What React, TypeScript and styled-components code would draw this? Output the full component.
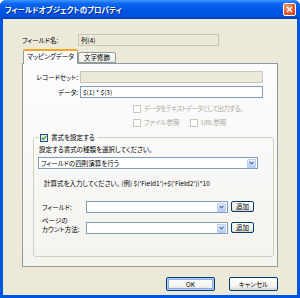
import styled, { createGlobalStyle } from "styled-components";

const GlobalStyle = createGlobalStyle`
  body {
    margin: 0;
    font-family: "Noto Sans CJK JP", "Noto Sans", sans-serif;
    font-feature-settings: "palt";
  }
`;

const Window = styled.div`
  width: 300px;
  height: 298px;
  box-sizing: border-box;
  display: flex;
  flex-direction: column;
  background: #0055e5;
  border-radius: 6px 6px 0 0;
  overflow: hidden;
`;

const TitleBar = styled.div`
  height: 19px;
  flex: none;
  display: flex;
  align-items: center;
  justify-content: space-between;
  padding: 0 4px 0 5px;
  background: linear-gradient(#3d95ff 0%, #0a66f0 20%, #0055e5 55%, #0050de 85%, #003fc0 100%);
`;

const Title = styled.div`
  color: #ffffff;
  font-size: 7.5px;
  font-weight: 700;
  text-shadow: 1px 1px 0 #0b2f8f;
`;

const CloseButton = styled.div`
  width: 13px;
  height: 13px;
  box-sizing: border-box;
  border: 1px solid #ffffff;
  border-radius: 2px;
  background: radial-gradient(circle at 35% 30%, #f4a07c 0%, #e35a2f 55%, #c43c12 100%);
  display: flex;
  align-items: center;
  justify-content: center;
`;

const Client = styled.div`
  flex: 1;
  margin: 0 3px 3px;
  background: #ece9d8;
  padding: 15px 19px 0 19px;
  display: flex;
  flex-direction: column;
`;

const NameRow = styled.div`
  display: flex;
  align-items: center;
  height: 12px;
`;

const Label = styled.div<{ $w?: number; $right?: boolean }>`
  width: ${(p) => (p.$w ? `${p.$w}px` : "auto")};
  flex: none;
  font-size: 6.5px;
  line-height: 9px;
  color: #000000;
  text-align: ${(p) => (p.$right ? "right" : "left")};
  white-space: nowrap;
`;

const TextBox = styled.div<{ $w: number; $disabled?: boolean }>`
  width: ${(p) => p.$w}px;
  height: 12px;
  box-sizing: border-box;
  border: 1px solid ${(p) => (p.$disabled ? "#c9c7ba" : "#7f9db9")};
  background: ${(p) => (p.$disabled ? "#ece9d8" : "#ffffff")};
  font-size: 6.5px;
  line-height: 10px;
  padding-left: 2px;
  color: #000000;
  white-space: nowrap;
`;

const TabStrip = styled.div`
  display: flex;
  align-items: flex-end;
  height: 14px;
  margin-top: 3px;
  padding-left: 1px;
  position: relative;
  z-index: 1;
`;

const Tab = styled.div<{ $active?: boolean; $w: number }>`
  width: ${(p) => p.$w}px;
  height: ${(p) => (p.$active ? 15 : 11)}px;
  box-sizing: border-box;
  border: 1px solid #919b9c;
  border-bottom: ${(p) => (p.$active ? "none" : "1px solid #919b9c")};
  border-top: ${(p) => (p.$active ? "2px solid #f5a623" : "1px solid #919b9c")};
  border-radius: 2px 2px 0 0;
  background: ${(p) =>
    p.$active ? "#fcfcfe" : "linear-gradient(#ffffff, #ecebe6)"};
  margin-bottom: ${(p) => (p.$active ? -1 : 0)}px;
  font-size: 6.5px;
  line-height: ${(p) => (p.$active ? 11 : 9)}px;
  text-align: center;
  white-space: nowrap;
`;

const TabPanel = styled.div`
  width: 256px;
  height: 204px;
  box-sizing: border-box;
  border: 1px solid #919b9c;
  background: linear-gradient(#fcfcfe, #f4f3ee);
  padding: 7px 0 0 0;
  display: flex;
  flex-direction: column;
`;

const FieldRow = styled.div<{ $gap?: number }>`
  display: flex;
  align-items: center;
  gap: 2px;
  margin-top: ${(p) => p.$gap ?? 0}px;
`;

const OptionRow = styled.div<{ $top: number }>`
  display: flex;
  align-items: center;
  padding-left: 110px;
  margin-top: ${(p) => p.$top}px;
  height: 9px;
`;

const Option = styled.div<{ $disabled?: boolean; $w?: number; $tight?: boolean }>`
  display: flex;
  align-items: center;
  gap: 3px;
  width: ${(p) => (p.$w ? `${p.$w}px` : "auto")};
  font-size: 6.5px;
  line-height: 9px;
  letter-spacing: ${(p) => (p.$tight ? "-0.6px" : "0")};
  color: ${(p) => (p.$disabled ? "#aca899" : "#000000")};
  white-space: nowrap;
`;

const Box = styled.div<{ $disabled?: boolean }>`
  width: 8px;
  height: 8px;
  box-sizing: border-box;
  flex: none;
  border: 1px solid ${(p) => (p.$disabled ? "#cac8bb" : "#1c5180")};
  background: ${(p) =>
    p.$disabled ? "#ffffff" : "linear-gradient(135deg, #dcdcd7, #ffffff)"};
  display: flex;
  align-items: center;
  justify-content: center;
`;

const GroupBox = styled.fieldset`
  margin: 6px 0 0 10px;
  width: 241px;
  height: 124px;
  box-sizing: border-box;
  border: 1px solid #d0d0bf;
  border-radius: 3px;
  padding: 0 0 0 5px;
  display: flex;
  flex-direction: column;
`;

const Legend = styled.legend`
  padding: 0 2px 0 1px;
  margin-left: 0;
  display: flex;
  align-items: center;
  gap: 3px;
  font-size: 6.5px;
  line-height: 9px;
`;

const Hint = styled.div<{ $top: number; $left?: number }>`
  font-size: 6.5px;
  line-height: 9px;
  margin-top: ${(p) => p.$top}px;
  margin-left: ${(p) => p.$left ?? 0}px;
  white-space: nowrap;
`;

const Select = styled.div<{ $w: number }>`
  width: ${(p) => p.$w}px;
  height: 12px;
  box-sizing: border-box;
  border: 1px solid #7f9db9;
  background: #ffffff;
  display: flex;
  align-items: center;
  justify-content: space-between;
  padding: 0 1px 0 2px;
  font-size: 6.5px;
  line-height: 10px;
  white-space: nowrap;
  flex: none;
`;

const SelectMain = styled(Select)`
  margin: 3px 0 0 -1px;
`;

const DropArrow = styled.div`
  width: 9px;
  height: 9px;
  box-sizing: border-box;
  border: 1px solid #b9cdf7;
  border-radius: 1px;
  background: linear-gradient(#e3ecfd, #b6cbf6);
  display: flex;
  align-items: center;
  justify-content: center;
`;

const ComboRow = styled.div<{ $top: number; $bottom?: boolean }>`
  display: flex;
  align-items: ${(p) => (p.$bottom ? "flex-end" : "center")};
  margin-top: ${(p) => p.$top}px;
  padding-left: 3px;
`;

const ComboLabel = styled.div`
  width: 44px;
  flex: none;
  font-size: 6.5px;
  line-height: 9px;
  white-space: nowrap;
`;

const SmallButton = styled.div`
  width: 23px;
  height: 11px;
  box-sizing: border-box;
  margin: 0 0 1px 3px;
  border: 1px solid #003c74;
  border-radius: 2px;
  background: linear-gradient(#ffffff, #ecebe6 80%, #d6d0c5);
  font-size: 6.5px;
  line-height: 9px;
  text-align: center;
`;

const ButtonRow = styled.div`
  display: flex;
  justify-content: flex-end;
  gap: 14px;
  margin-top: 10px;
`;

const Button = styled.div<{ $default?: boolean }>`
  width: 49px;
  height: 14px;
  box-sizing: border-box;
  border: 1px solid #003c74;
  border-radius: 2px;
  background: linear-gradient(#ffffff, #f3f3ef 70%, #d6d0c5);
  box-shadow: ${(p) =>
    p.$default ? "inset 0 0 0 1px #b7cdf4, inset 0 0 0 2px #89ade4" : "none"};
  font-size: 6.5px;
  line-height: 12px;
  text-align: center;
`;

const Check = () => (
  <svg width="6" height="6" viewBox="0 0 6 6">
    <path d="M0.8 3 L2.3 4.6 L5.2 1.2" fill="none" stroke="#21a121" strokeWidth="1.3" />
  </svg>
);

const Arrow = () => (
  <svg width="5" height="4" viewBox="0 0 5 4">
    <path d="M0.5 0.8 L2.5 2.8 L4.5 0.8" fill="none" stroke="#4d6185" strokeWidth="1.1" />
  </svg>
);

const CloseX = () => (
  <svg width="7" height="7" viewBox="0 0 7 7">
    <path d="M1 1 L6 6 M6 1 L1 6" stroke="#ffffff" strokeWidth="1.4" />
  </svg>
);

const Combo = () => (
  <Select $w={142}>
    <span />
    <DropArrow>
      <Arrow />
    </DropArrow>
  </Select>
);

export default function App() {
  return (
    <>
      <GlobalStyle />
      <Window>
        <TitleBar>
          <Title>フィールドオブジェクトのプロパティ</Title>
          <CloseButton>
            <CloseX />
          </CloseButton>
        </TitleBar>
        <Client>
          <NameRow>
            <Label $w={56}>フィールド名:</Label>
            <TextBox $w={141} $disabled>
              列(4)
            </TextBox>
          </NameRow>
          <TabStrip>
            <Tab $active $w={55}>
              マッピングデータ
            </Tab>
            <Tab $w={38}>文字修飾</Tab>
          </TabStrip>
          <TabPanel>
            <FieldRow>
              <Label $w={55} $right>
                レコードセット:
              </Label>
              <TextBox $w={183} $disabled />
            </FieldRow>
            <FieldRow $gap={3}>
              <Label $w={55} $right>
                データ:
              </Label>
              <TextBox $w={183}>$(1) * $(3)</TextBox>
            </FieldRow>
            <OptionRow $top={6}>
              <Option $disabled $tight>
                <Box $disabled />
                データをテキストデータとして出力する。
              </Option>
            </OptionRow>
            <OptionRow $top={5}>
              <Option $disabled $w={57}>
                <Box $disabled />
                ファイル参照
              </Option>
              <Option $disabled>
                <Box $disabled />
                URL参照
              </Option>
            </OptionRow>
            <GroupBox>
              <Legend>
                <Box>
                  <Check />
                </Box>
                書式を設定する
              </Legend>
              <Hint $top={3}>設定する書式の種類を選択してください。</Hint>
              <SelectMain $w={220}>
                フィールドの四則演算を行う
                <DropArrow>
                  <Arrow />
                </DropArrow>
              </SelectMain>
              <Hint $top={10} $left={5}>
                計算式を入力してください。 (例) $('Field1')+$('Field2'))*10
              </Hint>
              <ComboRow $top={13}>
                <ComboLabel>フィールド:</ComboLabel>
                <Combo />
                <SmallButton>追加</SmallButton>
              </ComboRow>
              <ComboRow $top={3} $bottom>
                <ComboLabel>
                  ページの
                  <br />
                  カウント方法:
                </ComboLabel>
                <Combo />
                <SmallButton>追加</SmallButton>
              </ComboRow>
            </GroupBox>
          </TabPanel>
          <ButtonRow>
            <Button $default>OK</Button>
            <Button>キャンセル</Button>
          </ButtonRow>
        </Client>
      </Window>
    </>
  );
}
